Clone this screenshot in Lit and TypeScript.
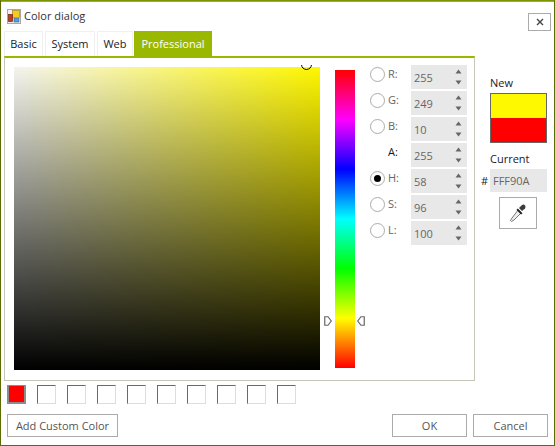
import { LitElement, html, css } from "lit";
import { customElement } from "lit/decorators.js";

const TABS = ["Basic", "System", "Web", "Professional"];
const ROWS: [string, string, boolean, boolean][] = [
  ["R:", "255", true, false],
  ["G:", "249", true, false],
  ["B:", "10", true, false],
  ["A:", "255", false, false],
  ["H:", "58", true, true],
  ["S:", "96", true, false],
  ["L:", "100", true, false],
];

@customElement("app-root")
export class AppRoot extends LitElement {
  static styles = css`
    :host {
      display: block;
      width: 555px;
      height: 446px;
      box-sizing: border-box;
      background: #fff;
      border: 1px solid #5b6d00;
      border-top: 1px solid #7c9400;
      font-family: "Open Sans", "Liberation Sans", sans-serif;
      font-size: 11px;
      color: #1a1a2a;
      overflow: hidden;
    }
    .title {
      display: flex;
      align-items: flex-start;
      height: 30px;
      border-top: 1px solid #9ab800;
      padding: 6px 3px 0 6px;
      box-sizing: border-box;
    }
    .title .cap { margin-left: 3px; color: #333; line-height: 16px; }
    .close {
      margin-left: auto;
      margin-top: 5px;
      width: 23px;
      height: 18px;
      box-sizing: border-box;
      border: 1px solid #ababab;
      display: flex;
      align-items: center;
      justify-content: center;
    }
    .tabs { display: flex; margin-left: 3px; height: 25px; gap: 2px; }
    .tab {
      display: flex;
      align-items: center;
      justify-content: center;
      padding-bottom: 2px;
      background: #fff;
      border: 1px solid #f0f0f0;
      border-bottom: 0;
      box-sizing: border-box;
    }
    .tab.on { background: #9ab800; color: #fff; border-color: #9ab800; margin-left: -1px; }
    .panel {
      margin-left: 3px;
      width: 471px;
      height: 325px;
      box-sizing: border-box;
      border: 1px solid #c4c6b8;
      border-top: 2px solid #9ab800;
      display: flex;
      padding: 9px 0 0 9px;
    }
    .square {
      width: 306px;
      height: 303px;
      position: relative;
      background:
        linear-gradient(to top, #000, rgba(0, 0, 0, 0)),
        linear-gradient(to right, #f4f4f0, #fff700);
    }
    .clip { position: absolute; inset: -2px 0 0 0; overflow: hidden; }
    .marker {
      position: absolute;
      left: 287px;
      top: -6px;
      width: 11px;
      height: 11px;
      box-sizing: border-box;
      border: 1px solid #000;
      border-radius: 50%;
    }
    .hue-wrap {
      position: relative;
      width: 20px;
      height: 298px;
      margin: 3px 0 0 15px;
      background: linear-gradient(
        to bottom,
        #f00 0%, #f0f 16.67%, #00f 33.33%, #0ff 50%, #0f0 66.67%, #ff0 83.33%, #f00 100%
      );
    }
    .arrow { position: absolute; top: 246px; }
    .arrow.l { left: -11px; }
    .arrow.r { right: -10px; }
    .rows {
      display: flex;
      flex-direction: column;
      gap: 2px;
      margin: -2px 0 0 15px;
    }
    .row { display: flex; align-items: flex-start; height: 24px; }
    .radio {
      width: 15px;
      height: 15px;
      margin-top: 2px;
      box-sizing: border-box;
      border: 1px solid #ababab;
      border-radius: 50%;
      display: flex;
      align-items: center;
      justify-content: center;
      flex: none;
    }
    .radio i { width: 7px; height: 7px; background: #000; border-radius: 50%; }
    .radio.none { visibility: hidden; }
    .lab { width: 26px; padding-left: 3px; box-sizing: border-box; color: #666; line-height: 16px; margin-top: 1px; }
    .lab.dark { color: #1a1a2a; }
    .spin {
      width: 56px;
      height: 24px;
      background: #e8e8e8;
      display: flex;
      align-items: center;
      justify-content: space-between;
      padding: 0 5px 0 3px;
      box-sizing: border-box;
      color: #666;
    }
    .arrows { display: flex; flex-direction: column; gap: 6px; }
    .body { display: flex; }
    .right {
      width: 76px;
      margin-left: 1px;
      margin-top: 5px;
      padding-left: 14px;
      box-sizing: border-box;
    }
    .lbl { line-height: 16px; height: 16px; }
    .new { margin-top: 14px; }
    .swatch {
      width: 57px;
      height: 50px;
      margin-top: 2px;
      box-sizing: border-box;
      border: 1px solid #666;
      display: flex;
      flex-direction: column;
    }
    .swatch div { flex: 1; }
    .swatch .a { background: #fff900; }
    .swatch .b { background: #f00; }
    .cur { margin-top: 8px; }
    .hexrow { display: flex; margin-left: -9px; margin-top: 2px; align-items: center; }
    .hash { width: 9px; }
    .hex {
      width: 57px;
      height: 23px;
      background: #e8e8e8;
      color: #666;
      display: flex;
      align-items: center;
      padding-left: 3px;
      box-sizing: border-box;
    }
    .drop {
      width: 38px;
      height: 32px;
      margin: 5px 0 0 9px;
      border: 1px solid #ababab;
      box-sizing: border-box;
      display: flex;
      align-items: center;
      justify-content: center;
    }
    .customs { display: flex; gap: 11px; margin: 4px 0 0 6px; }
    .cc {
      width: 19px;
      height: 19px;
      box-sizing: border-box;
      border: 1px solid #ddd;
      border-top: 1px solid #696969;
      border-left: 1px solid #696969;
      background: #fff;
    }
    .cc.red { background: #f00; border-color: #8c8c8c; border-width: 1px 2px 2px 2px; }
    .foot { display: flex; margin: 10px 6px 0 6px; }
    .btn {
      height: 23px;
      box-sizing: border-box;
      border: 1px solid #ababab;
      color: #555;
      display: flex;
      align-items: center;
      justify-content: center;
      background: #fff;
    }
    .add { width: 111px; }
    .ok { width: 75px; margin-left: auto; }
    .cancel { width: 75px; margin-left: 6px; }
    .w0 { width: 39px; }
    .w1 { width: 50px; }
    .w2 { width: 36px; }
    .w3 { width: 78px; }
    .ic { margin-top: 1px; }
  `;

  private tri(up: boolean) {
    return html`<svg width="7" height="5" viewBox="0 0 7 5">
      <path d=${up ? "M3.5 0.5 L6.5 4.5 H0.5 Z" : "M3.5 4.5 L6.5 0.5 H0.5 Z"} fill="#666"></path>
    </svg>`;
  }

  private icon() {
    return html`<svg class="ic" width="14" height="15" viewBox="0 0 14 15">
      <rect x="0.5" y="0.5" width="13" height="14" fill="#efefef" stroke="#a8a8a8"></rect>
      <rect x="5.5" y="1.5" width="7" height="7" fill="#f2cc20" stroke="#a88a10" stroke-width="0.7"></rect>
      <rect x="1.5" y="5.5" width="4" height="7" fill="#c83a20" stroke="#7a2010" stroke-width="0.7"></rect>
      <rect x="7" y="9.5" width="5" height="3.5" fill="#5a9ad8" stroke="#2a6a9a" stroke-width="0.6"></rect>
    </svg>`;
  }

  render() {
    return html`
      <div class="title">
        ${this.icon()}
        <span class="cap">Color dialog</span>
        <div class="close">
          <svg width="8" height="8" viewBox="0 0 8 8">
            <path d="M1 1 L7 7 M7 1 L1 7" stroke="#444" stroke-width="1.4"></path>
          </svg>
        </div>
      </div>
      <div class="tabs">
        ${TABS.map(
          (t, i) => html`<div class="tab w${i} ${i === 3 ? "on" : ""}">${t}</div>`
        )}
      </div>
      <div class="body">
        <div class="panel">
          <div class="square">
            <div class="clip"><div class="marker"></div></div>
          </div>
          <div class="hue-wrap">
            <svg class="arrow l" width="8" height="10" viewBox="0 0 8 10">
              <path d="M0.75 0.75 H4 L7.25 5 L4 9.25 H0.75 Z" fill="#fff" stroke="#666" stroke-width="1.2"></path>
            </svg>
            <svg class="arrow r" width="8" height="10" viewBox="0 0 8 10">
              <path d="M7.25 0.75 H4 L0.75 5 L4 9.25 H7.25 Z" fill="#fff" stroke="#666" stroke-width="1.2"></path>
            </svg>
          </div>
          <div class="rows">
            ${ROWS.map(
              ([l, v, radio, on]) => html`<div class="row">
                <div class="radio ${radio ? "" : "none"}">${on ? html`<i></i>` : ""}</div>
                <div class="lab ${radio ? "" : "dark"}">${l}</div>
                <div class="spin">
                  <span>${v}</span>
                  <div class="arrows">${this.tri(true)}${this.tri(false)}</div>
                </div>
              </div>`
            )}
          </div>
        </div>
        <div class="right">
          <div class="lbl new">New</div>
          <div class="swatch"><div class="a"></div><div class="b"></div></div>
          <div class="lbl cur">Current</div>
          <div class="hexrow"><span class="hash">#</span><div class="hex">FFF90A</div></div>
          <div class="drop">
            <svg width="18" height="20" viewBox="0 0 18 20">
              <path d="M9.5 6.5 L12.5 9.5 L5 17 L2.5 18.5 L1.5 17.5 L3 15 Z" fill="#eee" stroke="#666" stroke-width="0.9"></path>
              <path d="M8.5 5.5 L13.5 10.5 L12 11.5 L7.5 7 Z" fill="#222"></path>
              <path d="M10 5 L13 2 Q15 1 16 2.5 Q17 4 16 5.5 L13 8 Z" fill="#3c3c3c"></path>
            </svg>
          </div>
        </div>
      </div>
      <div class="customs">
        <div class="cc red"></div>
        ${Array.from({ length: 9 }, () => html`<div class="cc"></div>`)}
      </div>
      <div class="foot">
        <div class="btn add">Add Custom Color</div>
        <div class="btn ok">OK</div>
        <div class="btn cancel">Cancel</div>
      </div>
    `;
  }
}
